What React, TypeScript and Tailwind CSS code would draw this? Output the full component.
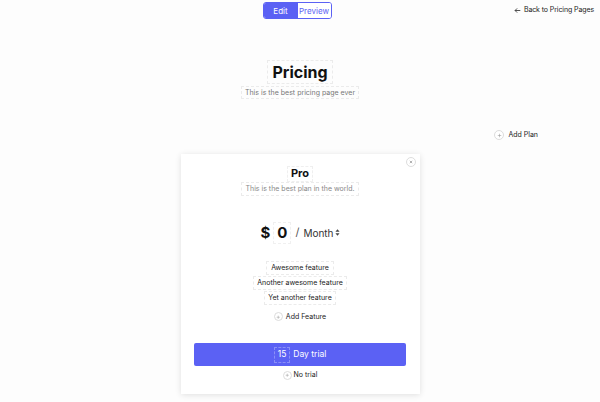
import React from "react";

function PlusCircle({ size = 10 }: { size?: number }) {
  return (
    <span
      className="inline-flex items-center justify-center rounded-full border border-[#dcdcdc] bg-white text-[#888]"
      style={{ width: size, height: size }}
    >
      <svg width={size * 0.5} height={size * 0.5} viewBox="0 0 10 10">
        <path d="M5 1.5v7M1.5 5h7" stroke="#999" strokeWidth="1.1" fill="none" />
      </svg>
    </span>
  );
}

export default function App() {
  return (
    <div
      className="w-[600px] h-[402px] overflow-hidden bg-[#fdfdfd] text-[#111] flex flex-col"
      style={{ fontFamily: "Inter, 'Noto Sans', sans-serif" }}
    >
      {/* top bar */}
      <div className="flex items-start h-[20px] pt-[2px]">
        <div className="flex-1" />
        <div className="flex h-[17px] rounded-[3px] border border-[#5b61f4] overflow-hidden text-[8px] leading-none">
          <div className="w-[34px] flex items-center justify-center bg-[#5b61f4] text-white">Edit</div>
          <div className="w-[33px] flex items-center justify-center bg-white text-[#5b61f4]">Preview</div>
        </div>
        <div className="flex-1 flex justify-end pr-[6px] pt-[3px]">
          <div className="flex items-center gap-[3px] text-[7px] text-[#222] tracking-[-0.1px]">
            <svg width="7" height="7" viewBox="0 0 10 10">
              <path d="M9 5H1.5M4.5 2L1.5 5l3 3" stroke="#333" strokeWidth="1.2" fill="none" />
            </svg>
            <span>Back to Pricing Pages</span>
          </div>
        </div>
      </div>

      {/* title */}
      <div className="flex flex-col items-center mt-[40px]">
        <div className="border border-dashed border-[#ebebeb] px-[4px] h-[24px] flex items-center text-[16px] font-bold leading-none">
          Pricing
        </div>
        <div className="mt-[2px] border border-dashed border-[#ebebeb] px-[3px] h-[13px] flex items-center text-[7px] text-[#777] leading-none">
          This is the best pricing page ever
        </div>
      </div>

      {/* add plan */}
      <div className="flex justify-end pr-[62px] mt-[31px]">
        <div className="flex items-center gap-[4px] text-[7px] text-[#222]">
          <PlusCircle size={10} />
          <span>Add Plan</span>
        </div>
      </div>

      {/* card */}
      <div className="flex justify-center mt-[13px]">
        <div className="relative w-[239px] h-[240px] bg-white shadow-[0_1px_6px_rgba(0,0,0,0.12)] flex flex-col items-center pt-[12px]">
          <div className="absolute right-[4px] top-[3px] w-[10px] h-[10px] rounded-full border border-[#ddd] flex items-center justify-center">
            <svg width="4" height="4" viewBox="0 0 10 10">
              <path d="M2 2l6 6M8 2l-6 6" stroke="#888" strokeWidth="1.6" />
            </svg>
          </div>
          <div className="border border-dashed border-[#efefef] px-[3px] h-[16px] flex items-center text-[11px] font-bold leading-none">
            Pro
          </div>
          <div className="border border-dashed border-[#ebebeb] px-[3px] h-[14px] flex items-center text-[7px] text-[#888] leading-none">
            This is the best plan in the world.
          </div>

          <div className="mt-[26px] flex items-center gap-[3px] leading-none">
            <span className="text-[15px] font-bold">$</span>
            <span className="border border-dashed border-[#f0f0f0] px-[3px] h-[22px] flex items-center text-[15px] font-bold">0</span>
            <span className="text-[11px] text-[#555] ml-[1px]">/</span>
            <span className="text-[10px] text-[#333] ml-[1px]">Month</span>
            <svg width="5" height="9" viewBox="0 0 6 10" className="-ml-[2px]">
              <path d="M0.5 4L3 1l2.5 3zM0.5 6L3 9l2.5-3z" fill="#444" />
            </svg>
          </div>

          <div className="mt-[17px] flex flex-col items-center gap-[1px] text-[7px] text-[#222] leading-none">
            <div className="border border-dashed border-[#ebebeb] px-[4px] h-[14px] flex items-center">Awesome feature</div>
            <div className="border border-dashed border-[#ebebeb] px-[3px] h-[14px] flex items-center">Another awesome feature</div>
            <div className="border border-dashed border-[#ebebeb] px-[3px] h-[14px] flex items-center">Yet another feature</div>
          </div>

          <div className="mt-[7px] flex items-center gap-[3px] text-[7px] text-[#222]">
            <PlusCircle size={9} />
            <span>Add Feature</span>
          </div>

          <div className="mt-[21px] w-[212px] h-[23px] rounded-[2px] bg-[#5b61f4] flex items-center justify-center gap-[3px] text-white text-[8.5px] leading-none">
            <span className="border border-dashed border-[#8a8ff7] px-[3px] h-[16px] flex items-center">15</span>
            <span>Day trial</span>
          </div>

          <div className="mt-[4px] flex items-center gap-[2px] text-[7px] text-[#222]">
            <PlusCircle size={9} />
            <span>No trial</span>
          </div>
        </div>
      </div>
    </div>
  );
}
